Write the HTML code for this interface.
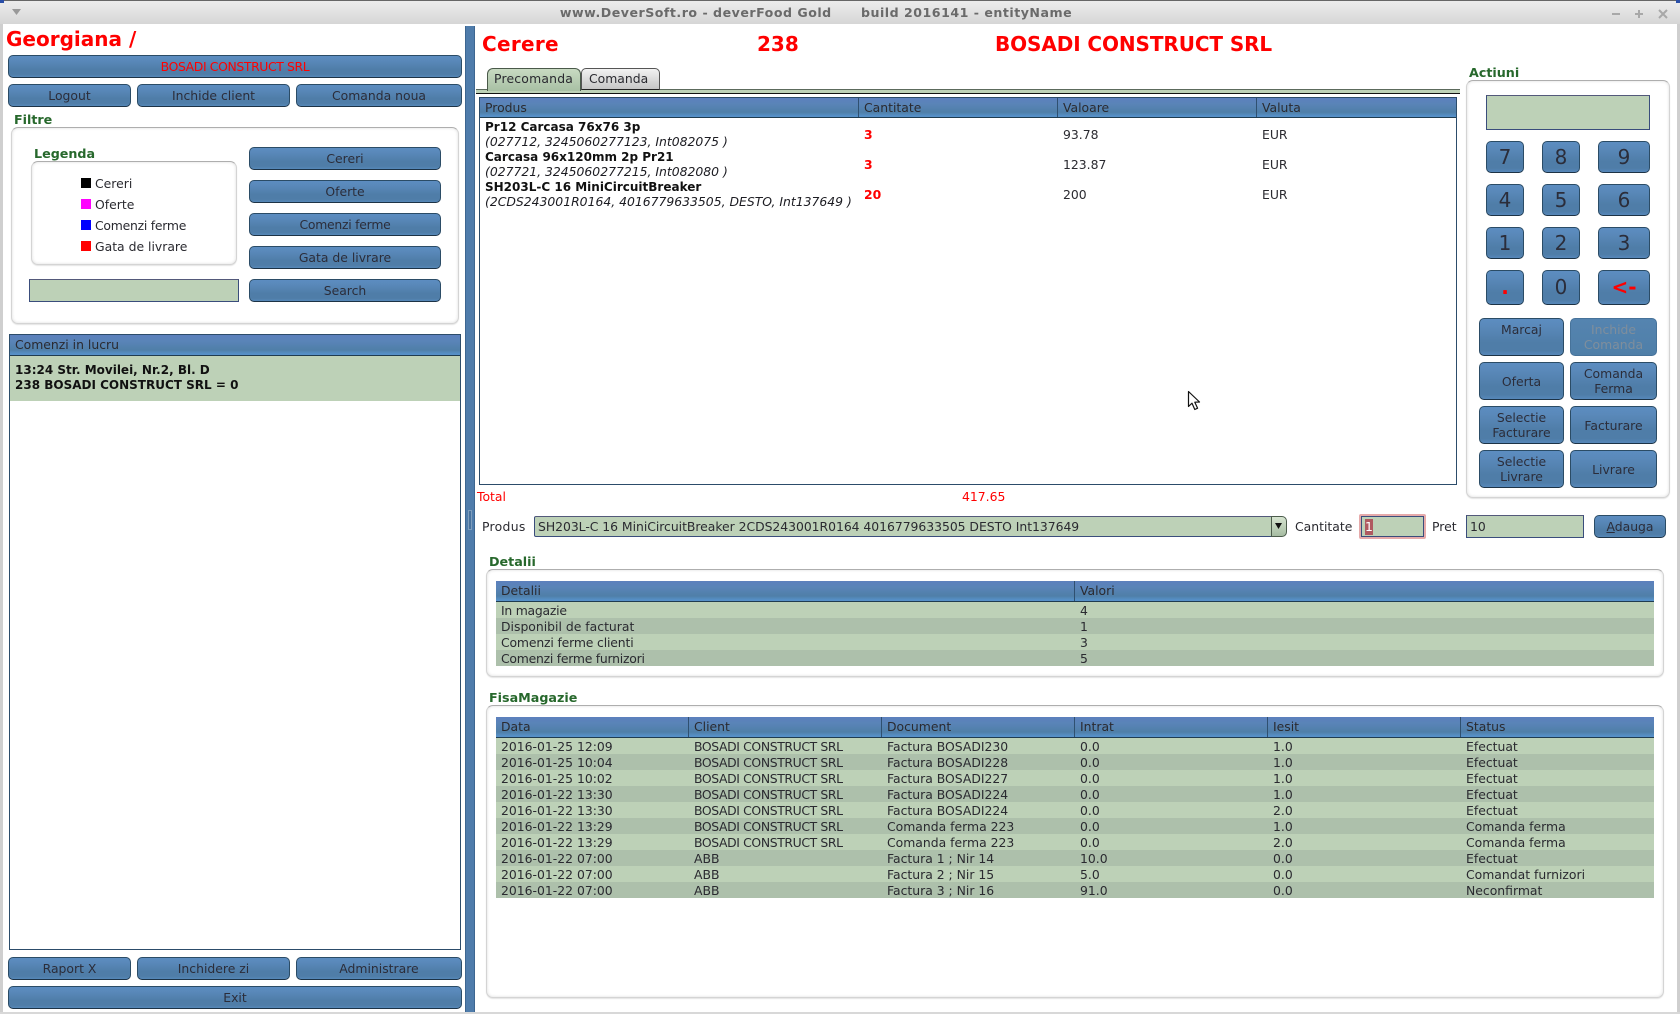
<!DOCTYPE html>
<html><head><meta charset="utf-8"><style>
html,body{margin:0;padding:0;background:#fff;width:1680px;height:1014px;overflow:hidden}
body{position:relative;font-family:"DejaVu Sans","Liberation Sans",sans-serif;font-size:12.4px;color:#2a2a30}
div,span{box-sizing:border-box}
.a{position:absolute}
.t{position:absolute;white-space:pre;line-height:16px}
.b{position:absolute;display:flex;align-items:center;justify-content:center;text-align:center;white-space:pre-line;line-height:15px;border:1px solid #2b4c66;border-bottom-color:#1d3346;border-radius:5px;color:#2b2d3a;background:linear-gradient(#5c8dc1 0,#5a89ba 20%,#4f7da8 65%,#4f7da8 88%,#5688ba 100%)}
.h{position:absolute;background:linear-gradient(#5c80bd 0,#5a84b8 30%,#4f7fa8 75%,#5690c8 95%);border-bottom:1px solid #1f3c50}
.d{position:absolute;top:0;bottom:0;width:1px;background:#2f5070}
.box{position:absolute;border:1px solid #d4d4d4;border-top-color:#aeaeae;border-radius:7px;box-shadow:inset 0 0 3px #ddd,0 1px 1px #e4e4e4;background:#fff}
.lb{position:absolute;white-space:pre;font-weight:bold;font-size:12.7px;line-height:16px;color:#27682c}
.in{position:absolute;background:#bdd1b7;border:1px solid #3a4d7c;border-top-color:#53597a}
.r{position:absolute;height:16px;line-height:16px;white-space:pre}
.g{background:#bdd1b7}.k{background:#adc0ab}
.r span{position:absolute;top:1px}
.red{color:#f00}
.p{font-weight:bold;font-size:12px;color:#111}
.i{font-style:italic;color:#1c1c22}
.sw{position:absolute;left:81px;width:10px;height:10px}
.np{font-size:20px}
.c{letter-spacing:-.37px}
.z{letter-spacing:-.24px}
</style></head><body>

<!-- window frame -->
<div class="a" style="left:0;top:0;width:1680px;height:24px;background:linear-gradient(#ececec,#d6d6d6);border-top:1px solid #666"></div>
<div class="a" style="left:0;top:0;width:4px;height:3px;background:#2a4fa8"></div>
<div class="a" style="left:1676px;top:0;width:4px;height:3px;background:#2a4fa8"></div>
<div class="a" style="left:0;top:24px;width:3px;height:990px;background:#cfcfcf"></div>
<div class="a" style="left:1677px;top:24px;width:3px;height:990px;background:#cfcfcf"></div>
<div class="a" style="left:0;top:1012px;width:1680px;height:2px;background:#d8d8d8"></div>
<div class="t" style="left:0;width:1632px;text-align:center;top:5px;font-weight:bold;font-size:12.6px;letter-spacing:.5px;color:#6a6a6a">www.DeverSoft.ro - deverFood Gold      build 2016141 - entityName</div>
<svg class="a" style="left:12px;top:9px" width="10" height="7"><path d="M0 0H9L4.5 6Z" fill="#999"/></svg>
<svg class="a" style="left:1610px;top:7px" width="60" height="13" fill="none" stroke="#a8a8a8" stroke-width="2">
<path d="M2 7H10"/><path d="M25 7H33M29 3V11"/><path d="M49 3L57 11M57 3L49 11"/></svg>

<!-- splitter -->
<div class="a" style="left:465px;top:26px;width:10px;height:986px;background:#4f7cab;border-left:1px solid #3d6690;border-right:1px solid #3d6690"></div>
<div class="a" style="left:468px;top:510px;width:4px;height:20px;border:1px solid #7d9dbd;background:#47719c"></div>

<!-- left -->
<div class="t" style="left:6px;top:27px;line-height:24px;font-weight:bold;font-size:20px;color:#f00">Georgiana /</div>
<div class="b c" style="left:8px;top:55px;width:454px;height:23px;color:#f00">BOSADI CONSTRUCT SRL</div>
<div class="b" style="left:8px;top:84px;width:123px;height:23px">Logout</div>
<div class="b" style="left:137px;top:84px;width:153px;height:23px">Inchide client</div>
<div class="b" style="left:296px;top:84px;width:166px;height:23px">Comanda noua</div>

<div class="lb" style="left:14px;top:112px">Filtre</div>
<div class="box" style="left:11px;top:127px;width:448px;height:197px"></div>
<div class="lb" style="left:34px;top:146px">Legenda</div>
<div class="box" style="left:31px;top:161px;width:206px;height:104px"></div>
<div class="sw" style="top:178px;background:#000"></div><div class="t" style="left:95px;top:176px">Cereri</div>
<div class="sw" style="top:199px;background:#f0f"></div><div class="t" style="left:95px;top:197px">Oferte</div>
<div class="sw" style="top:220px;background:#00f"></div><div class="t z" style="left:95px;top:218px">Comenzi ferme</div>
<div class="sw" style="top:241px;background:#f00"></div><div class="t" style="left:95px;top:239px">Gata de livrare</div>
<div class="b" style="left:249px;top:147px;width:192px;height:23px">Cereri</div>
<div class="b" style="left:249px;top:180px;width:192px;height:23px">Oferte</div>
<div class="b z" style="left:249px;top:213px;width:192px;height:23px">Comenzi ferme</div>
<div class="b" style="left:249px;top:246px;width:192px;height:23px">Gata de livrare</div>
<div class="b" style="left:249px;top:279px;width:192px;height:23px">Search</div>
<div class="in" style="left:29px;top:279px;width:210px;height:23px"></div>

<div class="a" style="left:9px;top:334px;width:452px;height:616px;border:1px solid #2c4c6a;background:#fff"></div>
<div class="h" style="left:10px;top:335px;width:450px;height:21px"></div>
<div class="t" style="left:15px;top:337px">Comenzi in lucru</div>
<div class="a" style="left:10px;top:356px;width:450px;height:45px;background:#bdd1b7"></div>
<div class="t p" style="left:15px;top:363px;line-height:15px">13:24 Str. Movilei, Nr.2, Bl. D
238 BOSADI CONSTRUCT SRL = 0</div>

<div class="b" style="left:8px;top:957px;width:123px;height:23px">Raport X</div>
<div class="b" style="left:137px;top:957px;width:153px;height:23px">Inchidere zi</div>
<div class="b" style="left:296px;top:957px;width:166px;height:23px">Administrare</div>
<div class="b" style="left:8px;top:986px;width:454px;height:23px">Exit</div>

<!-- header titles -->
<div class="t" style="left:482px;top:32px;line-height:24px;font-weight:bold;font-size:20px;letter-spacing:.3px;color:#f00">Cerere</div>
<div class="t" style="left:757px;top:32px;line-height:24px;font-weight:bold;font-size:20px;color:#f00">238</div>
<div class="t" style="left:995px;top:32px;line-height:24px;font-weight:bold;font-size:20px;letter-spacing:-.1px;color:#f00">BOSADI CONSTRUCT SRL</div>

<!-- tabs -->
<div class="a" style="left:476px;top:89px;width:984px;height:5px;background:#bdd1b7;border-top:1px solid #5c6a5c;border-bottom:1px solid #111"></div>
<div class="a" style="left:487px;top:68px;width:94px;height:23px;border:1px solid #4a5a4a;border-bottom:none;border-radius:6px 6px 0 0;background:linear-gradient(#c8dac2,#a8c0a4)"></div>
<div class="a" style="left:581px;top:68px;width:79px;height:22px;border:1px solid #555;border-bottom:1px solid #222;border-radius:5px 5px 0 0;background:linear-gradient(#f2f2f2,#c6c6c6)"></div>
<div class="t" style="left:494px;top:71px;letter-spacing:.2px">Precomanda</div>
<div class="t" style="left:589px;top:71px">Comanda</div>

<!-- product table -->
<div class="a" style="left:479px;top:97px;width:978px;height:388px;border:1px solid #2c4c6a;background:#fff"></div>
<div class="h" style="left:480px;top:98px;width:976px;height:20px"><div class="d" style="left:378px"></div><div class="d" style="left:577px"></div><div class="d" style="left:776px"></div></div>
<div class="t" style="left:485px;top:100px">Produs</div><div class="t" style="left:864px;top:100px">Cantitate</div><div class="t" style="left:1063px;top:100px">Valoare</div><div class="t" style="left:1262px;top:100px">Valuta</div>

<div class="t p" style="left:485px;top:119px">Pr12 Carcasa 76x76 3p</div>
<div class="t i" style="left:485px;top:134px">(027712, 3245060277123, Int082075 )</div>
<div class="t p" style="left:485px;top:149px">Carcasa 96x120mm 2p Pr21</div>
<div class="t i" style="left:485px;top:164px">(027721, 3245060277215, Int082080 )</div>
<div class="t p" style="left:485px;top:179px">SH203L-C 16 MiniCircuitBreaker</div>
<div class="t i" style="left:485px;top:194px">(2CDS243001R0164, 4016779633505, DESTO, Int137649 )</div>

<div class="t red" style="left:864px;top:127px;font-weight:bold">3</div><div class="t" style="left:1063px;top:127px">93.78</div><div class="t" style="left:1262px;top:127px">EUR</div>
<div class="t red" style="left:864px;top:157px;font-weight:bold">3</div><div class="t" style="left:1063px;top:157px">123.87</div><div class="t" style="left:1262px;top:157px">EUR</div>
<div class="t red" style="left:864px;top:187px;font-weight:bold">20</div><div class="t" style="left:1063px;top:187px">200</div><div class="t" style="left:1262px;top:187px">EUR</div>

<svg class="a" style="left:1187px;top:390px" width="14" height="22"><path d="M1.5 1.5V16.5L5 13.2L7.8 19.5L10.6 18.2L7.8 12.2L12.5 12Z" fill="#fff" stroke="#111" stroke-width="1.2" stroke-linejoin="round"/></svg>

<div class="t red" style="left:477px;top:489px">Total</div>
<div class="t red" style="left:962px;top:489px">417.65</div>

<!-- product row -->
<div class="t" style="left:482px;top:519px;letter-spacing:.3px">Produs</div>
<div class="in" style="left:534px;top:516px;width:738px;height:21px;border-radius:2px 0 0 2px"></div>
<div class="a" style="left:1271px;top:516px;width:16px;height:21px;border:1px solid #4c5c4c;border-radius:0 5px 5px 0;background:linear-gradient(#d6e4d0,#a6bca2)"></div>
<svg class="a" style="left:1275px;top:523px" width="8" height="7"><path d="M0 0H7L3.5 6Z" fill="#111"/></svg>
<div class="t" style="left:538px;top:519px;letter-spacing:-.03px">SH203L-C 16 MiniCircuitBreaker 2CDS243001R0164 4016779633505 DESTO Int137649</div>
<div class="t" style="left:1295px;top:519px">Cantitate</div>
<div class="a" style="left:1359px;top:514px;width:67px;height:25px;background:#e6aaaa;border-radius:2px"></div>
<div class="in" style="left:1361px;top:516px;width:63px;height:21px;border-width:1px;border-color:#3a4d7c"></div>
<div class="t" style="left:1365px;top:519px;width:8px;height:16px;background:#b05a60;color:#fff;text-align:center">1</div>
<div class="t" style="left:1432px;top:519px">Pret</div>
<div class="in" style="left:1466px;top:515px;width:118px;height:23px"></div>
<div class="t" style="left:1470px;top:519px">10</div>
<div class="b" style="left:1594px;top:515px;width:72px;height:23px"><span><u>A</u>dauga</span></div>

<!-- Actiuni -->
<div class="lb" style="left:1469px;top:65px">Actiuni</div>
<div class="box" style="left:1466px;top:80px;width:204px;height:418px"></div>
<div class="in" style="left:1486px;top:95px;width:164px;height:35px"></div>
<div class="b np" style="left:1486px;top:141px;width:38px;height:32px">7</div>
<div class="b np" style="left:1542px;top:141px;width:38px;height:32px">8</div>
<div class="b np" style="left:1598px;top:141px;width:52px;height:32px">9</div>
<div class="b np" style="left:1486px;top:184px;width:38px;height:32px">4</div>
<div class="b np" style="left:1542px;top:184px;width:38px;height:32px">5</div>
<div class="b np" style="left:1598px;top:184px;width:52px;height:32px">6</div>
<div class="b np" style="left:1486px;top:227px;width:38px;height:32px">1</div>
<div class="b np" style="left:1542px;top:227px;width:38px;height:32px">2</div>
<div class="b np" style="left:1598px;top:227px;width:52px;height:32px">3</div>
<div class="b np" style="left:1486px;top:270px;width:38px;height:35px;color:#f00;font-weight:bold">.</div>
<div class="b np" style="left:1542px;top:270px;width:38px;height:35px">0</div>
<div class="b np" style="left:1598px;top:270px;width:52px;height:35px;color:#f00;font-weight:bold">&lt;-</div>

<div class="b" style="left:1479px;top:318px;width:85px;height:38px;align-items:flex-start;padding-top:3px">Marcaj</div>
<div class="b" style="left:1570px;top:318px;width:87px;height:38px;color:#7f8e9c;border-color:#47739a;background:linear-gradient(#5584b0,#4f7fa8)">Inchide
Comanda</div>
<div class="b" style="left:1479px;top:362px;width:85px;height:38px">Oferta</div>
<div class="b" style="left:1570px;top:362px;width:87px;height:38px">Comanda
Ferma</div>
<div class="b" style="left:1479px;top:406px;width:85px;height:38px">Selectie
Facturare</div>
<div class="b" style="left:1570px;top:406px;width:87px;height:38px">Facturare</div>
<div class="b" style="left:1479px;top:450px;width:85px;height:38px">Selectie
Livrare</div>
<div class="b" style="left:1570px;top:450px;width:87px;height:38px">Livrare</div>

<!-- Detalii -->
<div class="lb" style="left:489px;top:554px">Detalii</div>
<div class="box" style="left:486px;top:569px;width:1178px;height:108px"></div>
<div class="h" style="left:496px;top:581px;width:1158px;height:21px"><div class="d" style="left:578px"></div></div>
<div class="t" style="left:501px;top:583px">Detalii</div><div class="t" style="left:1080px;top:583px">Valori</div>
<div class="r g" style="left:496px;top:602px;width:1158px"><span class="z" style="left:5px">In magazie</span><span style="left:584px">4</span></div>
<div class="r k" style="left:496px;top:618px;width:1158px"><span style="left:5px">Disponibil de facturat</span><span style="left:584px">1</span></div>
<div class="r g" style="left:496px;top:634px;width:1158px"><span style="left:5px;letter-spacing:-.15px">Comenzi ferme clienti</span><span style="left:584px">3</span></div>
<div class="r k" style="left:496px;top:650px;width:1158px"><span class="z" style="left:5px">Comenzi ferme furnizori</span><span style="left:584px">5</span></div>

<!-- FisaMagazie -->
<div class="lb" style="left:489px;top:690px">FisaMagazie</div>
<div class="box" style="left:486px;top:705px;width:1178px;height:293px"></div>
<div class="h" style="left:496px;top:717px;width:1158px;height:21px"><div class="d" style="left:192px"></div><div class="d" style="left:385px"></div><div class="d" style="left:578px"></div><div class="d" style="left:771px"></div><div class="d" style="left:964px"></div></div>
<div class="t" style="left:501px;top:719px">Data</div><div class="t" style="left:694px;top:719px">Client</div><div class="t" style="left:887px;top:719px">Document</div><div class="t" style="left:1080px;top:719px">Intrat</div><div class="t" style="left:1273px;top:719px">Iesit</div><div class="t" style="left:1466px;top:719px">Status</div>

<div class="r g" style="left:496px;top:738px;width:1158px"><span style="left:5px">2016-01-25 12:09</span><span class="c" style="left:198px">BOSADI CONSTRUCT SRL</span><span style="left:391px">Factura BOSADI230</span><span style="left:584px">0.0</span><span style="left:777px">1.0</span><span style="left:970px">Efectuat</span></div>
<div class="r k" style="left:496px;top:754px;width:1158px"><span style="left:5px">2016-01-25 10:04</span><span class="c" style="left:198px">BOSADI CONSTRUCT SRL</span><span style="left:391px">Factura BOSADI228</span><span style="left:584px">0.0</span><span style="left:777px">1.0</span><span style="left:970px">Efectuat</span></div>
<div class="r g" style="left:496px;top:770px;width:1158px"><span style="left:5px">2016-01-25 10:02</span><span class="c" style="left:198px">BOSADI CONSTRUCT SRL</span><span style="left:391px">Factura BOSADI227</span><span style="left:584px">0.0</span><span style="left:777px">1.0</span><span style="left:970px">Efectuat</span></div>
<div class="r k" style="left:496px;top:786px;width:1158px"><span style="left:5px">2016-01-22 13:30</span><span class="c" style="left:198px">BOSADI CONSTRUCT SRL</span><span style="left:391px">Factura BOSADI224</span><span style="left:584px">0.0</span><span style="left:777px">1.0</span><span style="left:970px">Efectuat</span></div>
<div class="r g" style="left:496px;top:802px;width:1158px"><span style="left:5px">2016-01-22 13:30</span><span class="c" style="left:198px">BOSADI CONSTRUCT SRL</span><span style="left:391px">Factura BOSADI224</span><span style="left:584px">0.0</span><span style="left:777px">2.0</span><span style="left:970px">Efectuat</span></div>
<div class="r k" style="left:496px;top:818px;width:1158px"><span style="left:5px">2016-01-22 13:29</span><span class="c" style="left:198px">BOSADI CONSTRUCT SRL</span><span style="left:391px">Comanda ferma 223</span><span style="left:584px">0.0</span><span style="left:777px">1.0</span><span style="left:970px">Comanda ferma</span></div>
<div class="r g" style="left:496px;top:834px;width:1158px"><span style="left:5px">2016-01-22 13:29</span><span class="c" style="left:198px">BOSADI CONSTRUCT SRL</span><span style="left:391px">Comanda ferma 223</span><span style="left:584px">0.0</span><span style="left:777px">2.0</span><span style="left:970px">Comanda ferma</span></div>
<div class="r k" style="left:496px;top:850px;width:1158px"><span style="left:5px">2016-01-22 07:00</span><span style="left:198px">ABB</span><span style="left:391px">Factura 1 ; Nir 14</span><span style="left:584px">10.0</span><span style="left:777px">0.0</span><span style="left:970px">Efectuat</span></div>
<div class="r g" style="left:496px;top:866px;width:1158px"><span style="left:5px">2016-01-22 07:00</span><span style="left:198px">ABB</span><span style="left:391px">Factura 2 ; Nir 15</span><span style="left:584px">5.0</span><span style="left:777px">0.0</span><span style="left:970px">Comandat furnizori</span></div>
<div class="r k" style="left:496px;top:882px;width:1158px"><span style="left:5px">2016-01-22 07:00</span><span style="left:198px">ABB</span><span style="left:391px">Factura 3 ; Nir 16</span><span style="left:584px">91.0</span><span style="left:777px">0.0</span><span style="left:970px">Neconfirmat</span></div>

</body></html>
